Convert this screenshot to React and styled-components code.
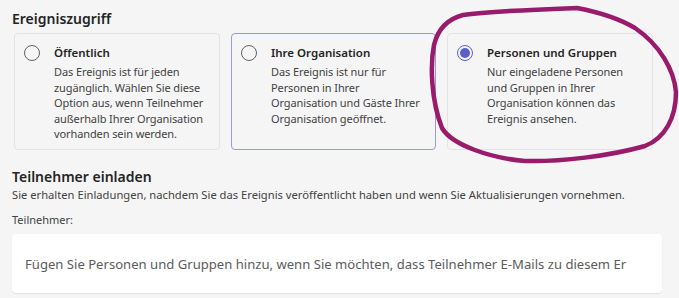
import React from "react";
import styled, { createGlobalStyle } from "styled-components";

const GlobalStyle = createGlobalStyle`
  body {
    margin: 0;
    background: #f5f5f5;
    font-family: "Noto Sans", "Open Sans", sans-serif;
    color: #242424;
  }
`;

const Page = styled.div`
  position: relative;
  width: 679px;
  height: 298px;
  overflow: hidden;
  padding: 9px 17px 0 12px;
  box-sizing: border-box;
`;

const SectionTitle = styled.h2`
  margin: 0;
  font-size: 14px;
  line-height: 20px;
  font-weight: 600;
  color: #242424;
`;

const Options = styled.div`
  display: grid;
  grid-template-columns: 206px 205px 206px;
  gap: 11px;
  margin: 4px 0 0 2px;
`;

const Card = styled.label`
  display: flex;
  gap: 14px;
  height: 117px;
  box-sizing: border-box;
  padding: 10px 4px 0 9px;
  border-radius: 4px;
  border: 1px solid ${(p) => (p.$hover ? "#9a9bcf" : "#e3e3e3")};
  background: #f5f5f5;
`;

const Radio = styled.span`
  flex: none;
  width: 14px;
  height: 14px;
  margin-top: 1px;
  border-radius: 50%;
  border: 1px solid ${(p) => (p.$checked ? "#5b5fc7" : "#616161")};
  display: flex;
  align-items: center;
  justify-content: center;
  &::after {
    content: "";
    display: ${(p) => (p.$checked ? "block" : "none")};
    width: 10px;
    height: 10px;
    border-radius: 50%;
    background: #5b5fc7;
  }
`;

const CardText = styled.div`
  display: flex;
  flex-direction: column;
  width: 155px;
`;

const CardTitle = styled.div`
  font-size: 11.5px;
  line-height: 18px;
  font-weight: 600;
  color: #242424;
`;

const CardBody = styled.div`
  margin-top: 2px;
  font-size: 11px;
  line-height: 15.5px;
  letter-spacing: -0.1px;
  color: #424242;
`;

const Invite = styled.div`
  margin-top: 17px;
`;

const Hint = styled.p`
  margin: 0;
  font-size: 11.2px;
  line-height: 16px;
  color: #424242;
`;

const FieldLabel = styled.div`
  margin-top: 9px;
  font-size: 11px;
  line-height: 16px;
  color: #424242;
`;

const InputBox = styled.div`
  margin-top: 6px;
  height: 59px;
  box-sizing: border-box;
  padding: 0 20px 0 13px;
  background: #fff;
  border-radius: 4px;
  box-shadow: 0 1px 1px rgba(0, 0, 0, 0.08);
  display: flex;
  align-items: center;
`;

const Placeholder = styled.span`
  font-size: 13.1px;
  color: #5c5c5c;
  white-space: nowrap;
`;

const Scribble = styled.svg`
  position: absolute;
  left: 0;
  top: 0;
  pointer-events: none;
`;

const options = [
  {
    title: "Öffentlich",
    body: "Das Ereignis ist für jeden zugänglich. Wählen Sie diese Option aus, wenn Teilnehmer außerhalb Ihrer Organisation vorhanden sein werden.",
  },
  {
    title: "Ihre Organisation",
    body: "Das Ereignis ist nur für Personen in Ihrer Organisation und Gäste Ihrer Organisation geöffnet.",
    hover: true,
  },
  {
    title: "Personen und Gruppen",
    body: "Nur eingeladene Personen und Gruppen in Ihrer Organisation können das Ereignis ansehen.",
    checked: true,
  },
];

export default function App() {
  return (
    <Page>
      <GlobalStyle />
      <SectionTitle>Ereigniszugriff</SectionTitle>
      <Options>
        {options.map((o) => (
          <Card key={o.title} $hover={o.hover}>
            <Radio $checked={o.checked} />
            <CardText>
              <CardTitle>{o.title}</CardTitle>
              <CardBody>{o.body}</CardBody>
            </CardText>
          </Card>
        ))}
      </Options>
      <Invite>
        <SectionTitle as="h3">Teilnehmer einladen</SectionTitle>
        <Hint>
          Sie erhalten Einladungen, nachdem Sie das Ereignis veröffentlicht haben und wenn Sie Aktualisierungen vornehmen.
        </Hint>
        <FieldLabel>Teilnehmer:</FieldLabel>
        <InputBox>
          <Placeholder>
            Fügen Sie Personen und Gruppen hinzu, wenn Sie möchten, dass Teilnehmer E-Mails zu diesem Er
          </Placeholder>
        </InputBox>
      </Invite>
      <Scribble width="679" height="298" viewBox="0 0 679 298">
        <path
          d="M577 8 C550 9 490 11 463 15 C448 19 438 28 434 45 C430 65 431 100 442 128 C452 145 490 158 525 161 C560 162 610 156 645 146 C665 138 676 118 676 92 C674 70 660 45 635 28 C618 18 598 12 577 8 Z"
          fill="none"
          stroke="#981b6c"
          strokeWidth="4.5"
          strokeLinecap="round"
          strokeLinejoin="round"
        />
      </Scribble>
    </Page>
  );
}
